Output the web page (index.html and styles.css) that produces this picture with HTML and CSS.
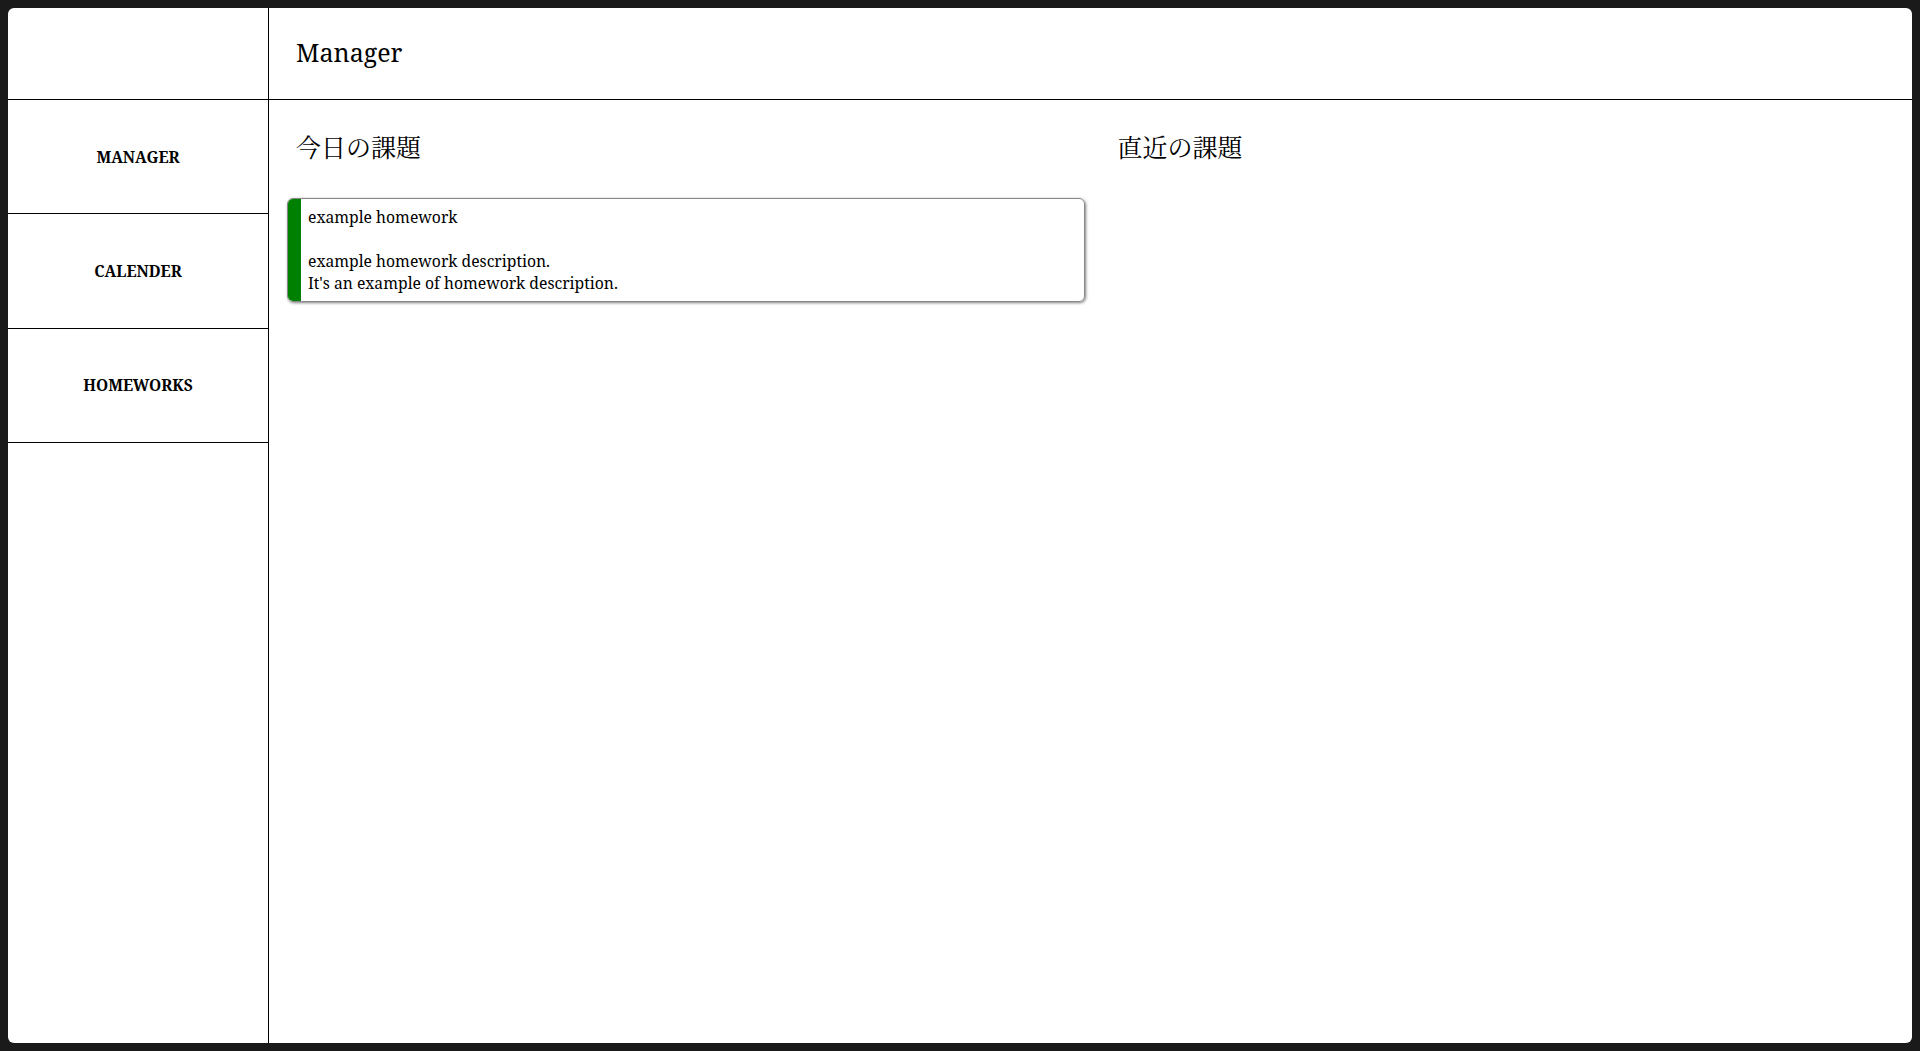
FILE: index.html
```html
<!DOCTYPE html>
<html lang="ja">
<head>
<meta charset="utf-8">
<title>Manager</title>
<link rel="stylesheet" href="styles.css">
</head>
<body>
<div class="app">
  <div class="logo-cell"></div>
  <header class="topbar"><h1 class="title">Manager</h1></header>
  <nav class="sidebar">
    <a class="nav-item">MANAGER</a>
    <a class="nav-item">CALENDER</a>
    <a class="nav-item">HOMEWORKS</a>
  </nav>
  <main class="content">
    <section class="column">
      <h2 class="col-title">今日の課題</h2>
      <div class="card">
        <div class="card-bar"></div>
        <div class="card-body">
          <div class="card-name">example homework</div>
          <div class="card-gap"></div>
          <div>example homework description.</div>
          <div>It's an example of homework description.</div>
        </div>
      </div>
    </section>
    <section class="column">
      <h2 class="col-title">直近の課題</h2>
    </section>
  </main>
</div>
</body>
</html>
```

FILE: styles.css
```css
html {
  background: #1a1a1a;
  height: 100%;
}
body {
  margin: 8px;
  height: calc(100% - 16px);
  font-family: "Noto Serif", "Noto Serif CJK JP", serif;
  color: #000;
}
.app {
  background: #fff;
  border-radius: 6px;
  height: 100%;
  display: grid;
  grid-template-columns: 261px 1fr;
  grid-template-rows: 92px 1fr;
  overflow: hidden;
}
.logo-cell {
  border-right: 1px solid #000;
  border-bottom: 1px solid #000;
}
.topbar {
  border-bottom: 1px solid #000;
  display: flex;
  align-items: center;
  padding-left: 27px;
  padding-bottom: 3px;
}
.title {
  margin: 0;
  font-size: 25px;
  font-weight: normal;
}
.sidebar {
  border-right: 1px solid #000;
  display: flex;
  flex-direction: column;
}
.nav-item {
  box-sizing: border-box;
  height: 114.4px;
  flex: none;
  border-bottom: 1px solid #000;
  display: flex;
  align-items: center;
  justify-content: center;
  font-weight: bold;
  font-size: 15.5px;
}
.content {
  display: grid;
  grid-template-columns: 1fr 1fr;
}
.column {
  padding: 0 6px 0 18px;
}
.col-title {
  margin: 28px 0 34px 9px;
  font-size: 25px;
  font-weight: normal;
}
.card {
  display: flex;
  border: 1px solid #888;
  border-radius: 6px;
  box-shadow: 1px 1px 3px rgba(0,0,0,0.5);
  overflow: hidden;
  font-size: 15.7px;
  line-height: 22px;
}
.card-bar {
  width: 13px;
  background: #008000;
  flex: none;
}
.card-body {
  padding: 7px 6px 7px 7px;
}
.card-gap {
  height: 22px;
}
```
